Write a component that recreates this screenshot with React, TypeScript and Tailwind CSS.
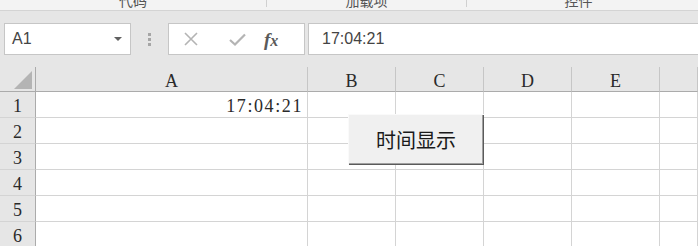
import React from "react";

const cols = ["A", "B", "C", "D", "E", ""];
const rows = [1, 2, 3, 4, 5, 6];

const serif = { fontFamily: '"Liberation Serif", "Noto Sans CJK SC", serif' };

export default function App() {
  return (
    <div className="relative w-[698px] h-[246px] overflow-hidden bg-[#e6e6e6] select-none">
      {/* ribbon group labels (cut off) */}
      <div className="flex h-[11px] bg-[#f3f3f3] border-b border-[#d4d4d4] overflow-hidden text-[14px] text-[#555] font-['Noto_Sans_CJK_SC',sans-serif]">
        <div className="w-[267px] flex justify-center border-r border-[#d0d0d0] h-[7px]">
          <span className="leading-[14px] -mt-[7px]">代码</span>
        </div>
        <div className="w-[200px] flex justify-center border-r border-[#d0d0d0] h-[7px]">
          <span className="leading-[14px] -mt-[7px]">加载项</span>
        </div>
        <div className="flex-1 flex justify-center">
          <span className="leading-[14px] -mt-[7px] -ml-[8px]">控件</span>
        </div>
      </div>

      {/* formula bar */}
      <div className="flex items-start h-[56px] pt-[12px] font-['Liberation_Sans',sans-serif] text-[16px] text-[#444]">
        <div className="ml-[4px] w-[127px] h-[32px] bg-white border border-[#c6c6c6] flex items-center pl-[7px] pr-[8px]">
          <span className="flex-1">A1</span>
          <span className="w-0 h-0 border-x-[4px] border-t-[4px] border-x-transparent border-t-[#606060]" />
        </div>
        <div className="w-[37px] h-[32px] flex flex-col items-center justify-center gap-[2px]">
          <span className="w-[3px] h-[3px] bg-[#a6a6a6]" />
          <span className="w-[3px] h-[3px] bg-[#a6a6a6]" />
          <span className="w-[3px] h-[3px] bg-[#a6a6a6]" />
        </div>
        <div className="w-[137px] h-[32px] bg-white border border-[#c6c6c6] flex items-center">
          <svg width="14" height="14" viewBox="0 0 14 14" className="ml-[15px]">
            <path d="M1 1L13 13M13 1L1 13" stroke="#b4b4b4" strokeWidth="1.6" fill="none" />
          </svg>
          <svg width="17" height="13" viewBox="0 0 17 13" className="ml-[31px]">
            <path d="M1 7L6 11.5L16 1.5" stroke="#b4b4b4" strokeWidth="2.2" fill="none" />
          </svg>
          <span className="ml-[18px] italic font-bold text-[19px] text-[#5a5a5a] leading-none" style={serif}>
            f<span className="text-[16px]">x</span>
          </span>
        </div>
        <div className="ml-[3px] flex-1 h-[32px] bg-white border border-[#c6c6c6] border-r-0 flex items-center pl-[13px]">
          17:04:21
        </div>
      </div>

      {/* grid */}
      <div
        className="grid grid-cols-[36px_272px_88px_88px_88px_88px_1fr] text-[18px] text-[#2a2a2a]"
        style={serif}
      >
        <div className="h-[25px] border-r border-b border-[#ababab] flex items-end justify-end pr-[3px] pb-[2px]">
          <svg width="18" height="18" viewBox="0 0 18 18">
            <polygon points="18,0 18,18 0,18" fill="#b4b4b4" />
          </svg>
        </div>
        {cols.map((c, i) => (
          <div
            key={i}
            className="h-[25px] border-r border-[#c6c6c6] border-b border-b-[#ababab] flex items-center justify-center leading-none pt-[3px]"
          >
            {c}
          </div>
        ))}
        {rows.map((r) => (
          <React.Fragment key={r}>
            <div className="h-[26px] bg-[#e6e6e6] border-r border-[#ababab] border-b border-b-[#d4d4d4] flex items-center justify-center leading-none pt-[2px]">
              {r}
            </div>
            {cols.map((c, i) => (
              <div
                key={c + i}
                className="h-[26px] bg-white border-r border-b border-[#d4d4d4] flex items-center justify-end pr-[4px] leading-none pt-[2px]"
              >
                {r === 1 && c === "A" ? <span className="tracking-[1.6px]">17:04:21</span> : null}
              </div>
            ))}
          </React.Fragment>
        ))}
      </div>

      {/* form control button over the sheet */}
      <button className="absolute left-[348px] top-[114px] w-[136px] h-[51px] bg-[#f0f0f0] shadow-[inset_1px_1px_0_#fafafa,inset_-1px_-1px_0_#5a5a5a,inset_-2px_-2px_0_#a0a0a0] flex items-center justify-center text-[20px] text-[#1a1a1a] font-['Noto_Sans_CJK_SC',sans-serif] leading-none">
        时间显示
      </button>
    </div>
  );
}
